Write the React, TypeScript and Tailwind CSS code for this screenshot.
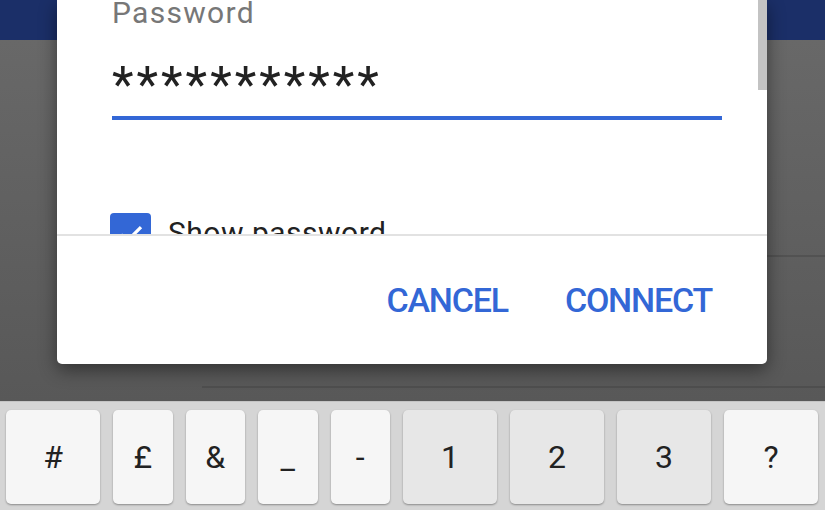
import React from 'react';

const FONT = { fontFamily: 'Roboto, "Noto Sans", sans-serif' };

type KeyProps = { label: string; wide?: boolean; dark?: boolean; low?: boolean };

const Key: React.FC<KeyProps> = ({ label, wide, dark, low }) => (
  <div
    className={
      'h-[94px] rounded-[5px] flex items-center justify-center text-[32px] text-[#222] shadow-[0_1px_2px_rgba(0,0,0,0.35)] ' +
      (wide ? 'w-[94px] ' : 'w-[59.5px] ') +
      (dark ? 'bg-[#e7e7e7]' : 'bg-[#f6f6f6]')
    }
  >
    <span className={low ? 'translate-y-[1px]' : ''}>{label}</span>
  </div>
);

export default function App() {
  return (
    <div className="relative w-[825px] h-[510px] overflow-hidden flex flex-col" style={FONT}>
      {/* background app */}
      <div className="h-[40px] bg-[#1b2f68]" />
      <div className="flex-1 bg-gradient-to-b from-[#686868] to-[#585858] flex flex-col">
        <div className="mt-[215px] ml-[202px] h-[2px] bg-[#525252]" />
        <div className="mt-[129px] ml-[202px] h-[2px] bg-[#4e4e4e]" />
      </div>

      {/* keyboard */}
      <div className="h-[109px] bg-[#d5d5d5] border-t border-[#c4c4c4] pt-[8px] pl-[6px] flex gap-[13px]">
        <Key label="#" wide />
        <Key label="£" />
        <Key label="&" />
        <Key label="_" low />
        <Key label="-" />
        <Key label="1" wide dark />
        <Key label="2" wide dark />
        <Key label="3" wide dark />
        <Key label="?" wide />
      </div>

      {/* dialog */}
      <div className="absolute left-[57px] top-0 w-[710px] bg-white rounded-b-[5px] shadow-[0_6px_18px_rgba(0,0,0,0.45)]">
        <div className="relative h-[234px] overflow-hidden pl-[55px] pr-[45px]">
          <div className="absolute right-0 top-0 w-[9px] h-[90px] bg-[#c3c3c3]" />
          <div className="text-[30px] leading-[30px] -mt-[2px] text-[#777] tracking-[1.3px]">Password</div>
          <div className="mt-[35px] text-[50px] leading-[44px] text-[#222] tracking-[3px]">***********</div>
          <div className="mt-[9px] h-[4px] bg-[#3367d6]" />
          <div className="mt-[93px] flex items-start">
            <div className="w-[41px] h-[41px] -ml-[2px] rounded-[4px] bg-[#3367d6] flex items-center justify-center">
              <svg width="30" height="30" viewBox="0 0 24 24" fill="none" stroke="white" strokeWidth="2.6">
                <path d="M4 12.5l5 5L20 6.5" />
              </svg>
            </div>
            <div className="ml-[17px] mt-[2px] text-[30px] leading-[36px] text-[#212121] tracking-[0.5px]">Show password</div>
          </div>
        </div>
        <div className="h-[2px] bg-[#e2e2e2]" />
        <div className="h-[128px] flex items-center justify-end pr-[55px] gap-[57px] text-[34px] font-medium text-[#3367d6] tracking-[-1.2px]">
          <span>CANCEL</span>
          <span>CONNECT</span>
        </div>
      </div>
    </div>
  );
}
